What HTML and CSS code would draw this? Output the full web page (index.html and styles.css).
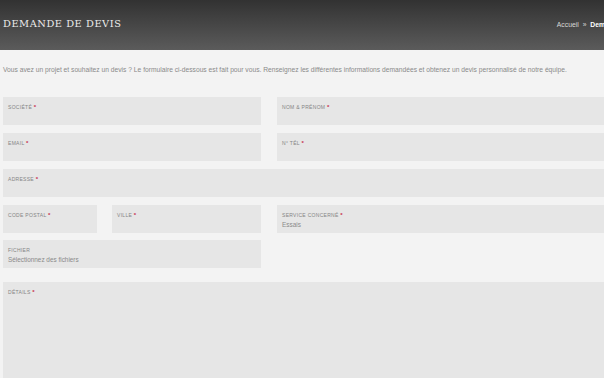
FILE: index.html
```html
<!DOCTYPE html>
<html lang="fr">
<head>
<meta charset="utf-8">
<title>Demande de devis</title>
<link rel="stylesheet" href="styles.css">
</head>
<body>
<div class="page">
  <header class="header">
    <h1 class="title">DEMANDE DE DEVIS</h1>
    <nav class="crumbs">Accueil <span class="sep">»</span> <strong>Demande de devis</strong></nav>
  </header>
  <p class="intro">Vous avez un projet et souhaitez un devis ? Le formulaire ci-dessous est fait pour vous. Renseignez les différentes informations demandées et obtenez un devis personnalisé de notre équipe.</p>
  <form class="form">
    <div class="row two">
      <div class="field"><span class="label">SOCIÉTÉ <b class="req">*</b></span></div>
      <div class="field"><span class="label">NOM &amp; PRÉNOM <b class="req">*</b></span></div>
    </div>
    <div class="row two">
      <div class="field"><span class="label">EMAIL <b class="req">*</b></span></div>
      <div class="field"><span class="label">N° TÉL <b class="req">*</b></span></div>
    </div>
    <div class="row one">
      <div class="field"><span class="label">ADRESSE <b class="req">*</b></span></div>
    </div>
    <div class="row three">
      <div class="field"><span class="label">CODE POSTAL <b class="req">*</b></span></div>
      <div class="field"><span class="label">VILLE <b class="req">*</b></span></div>
      <div class="field"><span class="label">SERVICE CONCERNÉ <b class="req">*</b></span><span class="value">Essais</span></div>
    </div>
    <div class="row two file-row">
      <div class="field"><span class="label">FICHIER</span><span class="value file">Sélectionnez des fichiers</span></div>
    </div>
    <div class="row one details-row">
      <div class="field details"><span class="label">DÉTAILS <b class="req">*</b></span></div>
    </div>
  </form>
</div>
</body>
</html>
```
FILE: styles.css
```css
html, body {
  margin: 0;
  padding: 0;
  overflow: hidden;
  background: #f3f3f3;
}
.page {
  width: 654px;
  font-family: "Liberation Sans", Arial, sans-serif;
}
.header {
  height: 50px;
  background: linear-gradient(#323232, #5b5b5b);
  display: flex;
  align-items: center;
  justify-content: space-between;
  padding: 0 4px 0 3px;
  box-sizing: border-box;
}
.title {
  margin: 0;
  font-family: "DejaVu Serif", serif;
  font-weight: normal;
  font-size: 9.8px;
  letter-spacing: 0.55px;
  color: #ececec;
  padding-bottom: 3px;
}
.crumbs {
  font-size: 6.8px;
  color: #d8d8d8;
  padding-bottom: 2px;
}
.crumbs strong {
  color: #fff;
}
.sep {
  margin: 0 2px;
}
.intro {
  margin: 16px 0 0 3px;
  font-size: 6.7px;
  line-height: 8px;
  color: #8a8a8a;
}
.form {
  margin: 23px 0 0 3px;
  display: flex;
  flex-direction: column;
  gap: 8px;
}
.row {
  display: grid;
  column-gap: 16px;
}
.row.two {
  grid-template-columns: 258px 1fr;
}
.row.one {
  grid-template-columns: 1fr;
}
.row.three {
  grid-template-columns: 94px 149px 1fr;
  column-gap: 15px;
}
.row.three .field:nth-child(3) {
  margin-left: 1px;
}
.file-row {
  margin-top: -1px;
}
.details-row {
  margin-top: 6px;
}
.field {
  background: #e6e6e6;
  height: 28px;
  box-sizing: border-box;
  padding: 7px 5px 0;
  display: flex;
  flex-direction: column;
  gap: 3px;
}
.details {
  height: 110px;
}
.label {
  font-size: 5px;
  letter-spacing: 0.3px;
  color: #858585;
  line-height: 6px;
}
.req {
  color: #c7304e;
  font-weight: bold;
  font-size: 6px;
}
.value {
  font-size: 6.4px;
  line-height: 8px;
  color: #8a8a8a;
}
.value.file {
  margin-top: 0;
}
```
